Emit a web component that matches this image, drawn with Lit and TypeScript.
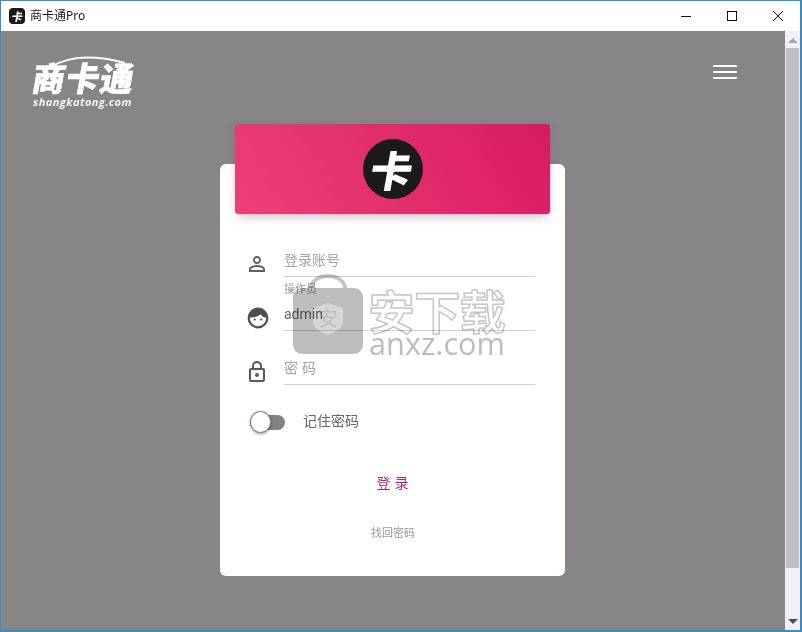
import { LitElement, html, css } from "lit";
import { customElement } from "lit/decorators.js";

@customElement("app-root")
export class AppRoot extends LitElement {
  static styles = css`
    :host { display: block; width: 802px; height: 632px; font-family: Roboto, "Noto Sans CJK SC", sans-serif; }
    * { box-sizing: border-box; }
    .window { width: 802px; height: 632px; display: flex; flex-direction: column; border: 1px solid #3a8dc0; border-width: 1px 2px 2px 1px; background: #fff; overflow: hidden; }
    .titlebar { flex: none; height: 30px; display: flex; align-items: center; padding-left: 8px; background: #fff; color: #1a1a1a; }
    .app-icon { width: 16px; height: 16px; border-radius: 4px; background: #1a1a1a; color: #fff; display: flex; align-items: center; justify-content: center; }
    .app-glyph { display: block; font: 900 11px/14px "Noto Sans CJK SC", sans-serif; transform: skewX(-10deg); }
    .title { margin-left: 5px; font: 12px/16px "Noto Sans", "Noto Sans CJK SC", sans-serif; white-space: nowrap; }
    .controls { margin-left: auto; margin-right: -1px; display: flex; }
    .ctl { width: 46px; height: 30px; display: flex; align-items: center; justify-content: center; }
    .ctl svg { display: block; }
    .content { flex: 1; min-height: 0; display: flex; }
    .main { flex: 1; min-width: 0; background: #878587; display: flex; flex-direction: column; align-items: center; padding-right: 1px; }
    .topbar { width: 100%; height: 93px; display: flex; justify-content: space-between; align-items: flex-start; padding: 23px 47px 0 32px; }
    .logo { position: relative; width: 104px; color: #fff; }
    .logo svg { position: absolute; left: 14px; top: 0; }
    .logo-cn { display: block; font: 900 33px/38px "Noto Sans CJK SC", sans-serif; letter-spacing: 1px; margin-top: 4px; transform: skewX(-10deg); white-space: nowrap; -webkit-text-stroke: 0.6px #fff; }
    .logo-en { display: block; font: italic 700 11px/12px "Open Sans", sans-serif; letter-spacing: 0.45px; margin-top: 0; opacity: .92; white-space: nowrap; }
    .menu { width: 24px; margin-top: 11px; display: flex; flex-direction: column; gap: 4px; }
    .menu span { display: block; height: 2px; background: #fff; }
    .card { position: relative; width: 345px; height: 412px; margin-top: 40px; background: #fff; border-radius: 6px; display: flex; flex-direction: column; align-items: center; }
    .banner { width: 315px; height: 90px; margin-top: -40px; border-radius: 3px; background: linear-gradient(60deg, #ec407a, #d81b60); box-shadow: 0 4px 10px -3px rgba(120, 40, 90, .4); display: flex; align-items: center; justify-content: center; flex: none; }
    .badge { width: 60px; height: 60px; border-radius: 50%; background: #1a1a1c; color: #fff; display: flex; align-items: center; justify-content: center; }
    .badge-glyph { display: block; font: 900 42px/50px "Noto Sans CJK SC", sans-serif; transform: skewX(-10deg); }
    .form { width: 100%; margin-top: 9px; padding: 0 30px 0 25px; display: flex; flex-direction: column; }
    .row { height: 54px; display: flex; gap: 15px; }
    .row svg { flex: none; align-self: flex-end; margin-bottom: 1px; }
    .field { flex: 1; min-width: 0; display: flex; flex-direction: column; border-bottom: 1px solid #cfcfcf; position: relative; }
    .value { margin-top: auto; height: 25px; font-size: 14px; line-height: 18px; color: #666; }
    .ph { color: #a6a6a6; }
    .spaced { letter-spacing: 4px; }
    .label { font-size: 11px; line-height: 13px; color: #999; margin-top: 6px; }
    .remember { display: flex; align-items: center; height: 22px; margin: 26px 0 0 5px; }
    .switch { position: relative; width: 35px; height: 15px; border-radius: 8px; background: #828082; }
    .thumb { position: absolute; left: 0; top: -4px; width: 21px; height: 22px; border-radius: 50%; background: #fff; border: 1px solid #8a8a8a; box-shadow: 0 1px 3px rgba(0, 0, 0, .4); }
    .remember-text { margin-left: 19px; font-size: 14px; line-height: 18px; color: #666; transform: translate(-1px, -1px); }
    .login { margin-top: 40px; font-size: 14px; line-height: 20px; letter-spacing: 4px; text-indent: 4px; color: #b8236f; }
    .forgot { margin-top: 34px; padding-left: 1px; font-size: 11px; line-height: 14px; color: #999; }
    .wm { position: absolute; left: 73px; top: 110px; width: 220px; height: 84px; pointer-events: none; mix-blend-mode: multiply; display: flex; gap: 1px; }
    .wm-bag { flex: none; }
    .wm-text { display: flex; flex-direction: column; align-items: center; width: 146px; }
    .wm-cn { font: 700 46px/48px "Noto Sans CJK SC", sans-serif; letter-spacing: -0.4px; color: #fff; -webkit-text-stroke: 1.5px #c6c6c6; margin-top: 11px; white-space: nowrap; }
    .wm-en { font: 400 30.700px/30px "Open Sans", sans-serif; color: #bdbdbd; margin-top: -5px; white-space: nowrap; }
    .wm-shield-text { font: 400 20px "Noto Sans CJK SC", sans-serif; fill: #bdbdbd; }
    .scroll { flex: none; width: 15px; background: #f1eff3; display: flex; flex-direction: column; align-items: center; padding-top: 7px; }
    .arrow { width: 0; height: 0; border-left: 5px solid transparent; border-right: 5px solid transparent; }
    .up { border-bottom: 5px solid #a5a3a7; }
    .down { border-top: 5px solid #505050; margin-bottom: 6px; }
    .thumb-bar { width: 13px; height: 520px; margin-top: 5px; background: #c0bec2; }
    .spacer { flex: 1; }
  `;

  private personIcon() {
    return html`<svg width="24" height="24" viewBox="0 0 24 24" fill="#616161"><path d="M12 5.900c1.160 0 2.100.94 2.100 2.100s-.94 2.100-2.100 2.100S9.900 9.160 9.900 8s.94-2.100 2.100-2.100m0 9c2.970 0 6.100 1.460 6.100 2.100v1.100H5.900V17c0-.64 3.130-2.100 6.100-2.100M12 4C9.790 4 8 5.790 8 8s1.790 4 4 4 4-1.790 4-4-1.790-4-4-4zm0 9c-2.670 0-8 1.340-8 4v3h16v-3c0-2.660-5.330-4-8-4z"/></svg>`;
  }
  private faceIcon() {
    return html`<svg width="24" height="24" viewBox="0 0 24 24"><circle cx="13" cy="12" r="9.300" fill="#fff" stroke="#4f4f4f" stroke-width="2.200"/><path d="M4 11.500C4 6 8 3 13 3s9 3 9 8.500c-2.500.5-5-1-6.500-3.300C13.500 10.500 8 12 4 11.500z" fill="#4f4f4f"/><circle cx="9.800" cy="13.500" r="1.100" fill="#4f4f4f"/><circle cx="16.200" cy="13.500" r="1.100" fill="#4f4f4f"/></svg>`;
  }
  private lockIcon() {
    return html`<svg width="24" height="24" viewBox="0 0 24 24" fill="#595959"><path d="M12 17c1.100 0 2-.9 2-2s-.9-2-2-2-2 .9-2 2 .9 2 2 2zm6-9h-1V6c0-2.760-2.240-5-5-5S7 3.240 7 6v2H6c-1.100 0-2 .9-2 2v10c0 1.100.9 2 2 2h12c1.100 0 2-.9 2-2V10c0-1.100-.9-2-2-2zM8.900 6c0-1.710 1.390-3.100 3.100-3.100s3.100 1.390 3.100 3.100v2H8.900V6zM18 20H6V10h12v10z"/></svg>`;
  }

  render() {
    return html`
      <div class="window">
        <div class="titlebar">
          <div class="app-icon"><span class="app-glyph">卡</span></div>
          <div class="title">商卡通Pro</div>
          <div class="controls">
            <div class="ctl"><svg width="12" height="12"><path d="M1 6.500h10" stroke="#111" stroke-width="1"/></svg></div>
            <div class="ctl"><svg width="12" height="12"><rect x="1.500" y="1.500" width="9" height="9" fill="none" stroke="#111"/></svg></div>
            <div class="ctl"><svg width="12" height="12"><path d="M1 1l10 10M11 1L1 11" stroke="#111" stroke-width="1"/></svg></div>
          </div>
        </div>
        <div class="content">
          <div class="main">
            <div class="topbar">
              <div class="logo">
                <svg width="90" height="14" viewBox="0 0 90 14" fill="none"><path d="M4 13C20 3 44 0 78 9" stroke="#fff" stroke-width="2"/></svg>
                <span class="logo-cn">商卡通</span>
                <span class="logo-en">shangkatong.com</span>
              </div>
              <div class="menu"><span></span><span></span><span></span></div>
            </div>
            <div class="card">
              <div class="banner"><div class="badge"><span class="badge-glyph">卡</span></div></div>
              <div class="form">
                <div class="row">
                  ${this.personIcon()}
                  <div class="field"><div class="value ph">登录账号</div></div>
                </div>
                <div class="row">
                  ${this.faceIcon()}
                  <div class="field"><div class="label">操作员</div><div class="value">admin</div></div>
                </div>
                <div class="row">
                  ${this.lockIcon()}
                  <div class="field"><div class="value ph spaced">密码</div></div>
                </div>
                <div class="remember">
                  <div class="switch"><div class="thumb"></div></div>
                  <div class="remember-text">记住密码</div>
                </div>
              </div>
              <div class="login">登录</div>
              <div class="forgot">找回密码</div>
              <div class="wm">
                <svg class="wm-bag" width="70" height="84" viewBox="0 0 70 84">
                  <path d="M17 18C18 6 26 2 35 2s17 4 18 16" fill="none" stroke="#c4c4c4" stroke-width="4"/>
                  <rect x="0" y="14" width="70" height="66" rx="9" fill="#bdbdbd"/>
                  <path d="M35 29l15 5v13c0 7-7 11-15 14-8-3-15-7-15-14V34z" fill="#d6d6d6"/>
                  <text class="wm-shield-text" x="35" y="52" text-anchor="middle">安</text>
                </svg>
                <div class="wm-text">
                  <div class="wm-cn">安下载</div>
                  <div class="wm-en">anxz.com</div>
                </div>
              </div>
            </div>
          </div>
          <div class="scroll">
            <div class="arrow up"></div>
            <div class="thumb-bar"></div>
            <div class="spacer"></div>
            <div class="arrow down"></div>
          </div>
        </div>
      </div>
    `;
  }
}
